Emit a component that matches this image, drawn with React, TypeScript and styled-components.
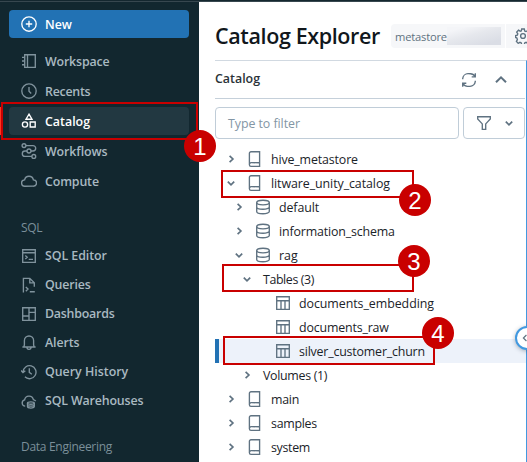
import React from "react";
import styled, { createGlobalStyle } from "styled-components";

const Global = createGlobalStyle`
  * { box-sizing: border-box; }
  body {
    margin: 0;
    overflow: hidden;
    background: #fff;
    font-family: "Open Sans", "Noto Sans", sans-serif;
    font-size: 12.4px;
    color: #11171c;
  }
`;

const Screen = styled.div`
  position: relative;
  display: flex;
  flex-direction: column;
  width: 527px;
  height: 462px;
  overflow: hidden;
`;

const TopStrip = styled.div`
  flex: none;
  height: 2px;
  background: #14272f;
  border-bottom: 1px solid #37474f;
`;

const Body = styled.div`
  display: flex;
  flex: 1;
  min-height: 0;
`;

const Sidebar = styled.nav`
  flex: none;
  width: 199px;
  padding: 8px 10px 0 9px;
  background: #12272f;
  overflow: hidden;
`;

const Label = styled.span<{ $spacing?: number }>`
  white-space: nowrap;
  letter-spacing: ${(p) => p.$spacing ?? 0}px;
`;

const NavItem = styled.div<{ $tall?: boolean; $active?: boolean }>`
  display: flex;
  align-items: center;
  gap: 8px;
  height: ${(p) => (p.$tall ? 28 : 27)}px;
  margin-bottom: 2px;
  padding-left: 12px;
  border-radius: 4px;
  font-weight: 600;
  color: ${(p) => (p.$active ? "#ffffff" : "#a9b9c1")};
  background: ${(p) => (p.$active ? "#223841" : "transparent")};
  svg { color: ${(p) => (p.$active ? "#ffffff" : "#80939d")}; }
`;

const NewButton = styled(NavItem)`
  margin-bottom: 9px;
  color: #fff;
  background: #2272b4;
  svg { color: #fff; }
`;

const SectionTitle = styled.div`
  height: 18px;
  margin: 24px 0 5px;
  padding-left: 12px;
  font-size: 12px;
  line-height: 18px;
  color: #7b8f99;
`;

const Main = styled.main`
  display: flex;
  flex-direction: column;
  flex: 1;
  min-width: 0;
  padding-left: 16px;
  background: #fff;
`;

const Header = styled.header`
  display: flex;
  align-items: center;
  flex: none;
  height: 58px;
  padding-top: 10px;
`;

const Title = styled.h1`
  flex: none;
  width: 176px;
  margin: 0;
  font-size: 21.5px;
  font-weight: 600;
  line-height: 28px;
  letter-spacing: -0.38px;
  white-space: nowrap;
`;

const Chip = styled.div`
  display: flex;
  align-items: center;
  flex: none;
  width: 114px;
  height: 24px;
  padding-left: 4px;
  border-radius: 4px 0 0 4px;
  background: #f6f7f9;
  color: #5f7281;
  font-size: 11.2px;
`;

const Redacted = styled.span`
  width: 54px;
  height: 18px;
  background: linear-gradient(165deg, #f4f5f8 15%, #e6e8ed 45%, #dadde5 85%);
`;

const GearChip = styled.div`
  display: flex;
  align-items: center;
  flex: none;
  width: 32px;
  height: 24px;
  margin-left: 1px;
  padding-left: 9px;
  background: #f6f7f9;
  color: #5f7281;
`;

const Panel = styled.section`
  flex: 1;
  border-top: 1px solid #d1d9e1;
  border-right: 1px solid #4299e0;
`;

const PanelHeader = styled.div`
  display: flex;
  align-items: center;
  height: 38px;
  margin-right: 1px;
  padding-bottom: 2px;
  border-bottom: 1px solid #c5d0da;
  font-weight: 600;
  color: #2a3238;
`;

const HeaderActions = styled.div`
  display: flex;
  align-items: center;
  gap: 16px;
  margin: 2px 16px 0 auto;
  color: #5f7281;
`;

const FilterRow = styled.div`
  display: flex;
  gap: 4px;
  margin: 8px 1px 8px 0;
`;

const FilterBox = styled.div`
  width: 244px;
  height: 32px;
  padding-left: 12px;
  border: 1px solid #c0cdd8;
  border-radius: 4px;
  line-height: 31px;
  color: #8396a5;
`;

const FilterButton = styled.div`
  display: flex;
  align-items: center;
  gap: 9px;
  flex: 1;
  height: 32px;
  padding-left: 12px;
  border: 1px solid #c0cdd8;
  border-radius: 4px;
  color: #5f7281;
`;

const TreeRow = styled.div<{ $depth: number; $selected?: boolean }>`
  display: flex;
  align-items: center;
  height: 24px;
  padding-left: ${(p) => 8 + p.$depth * 8 - (p.$selected ? 4 : 0)}px;
  border-left: ${(p) => (p.$selected ? "4px solid #2272b4" : "0")};
  background: ${(p) => (p.$selected ? "#edf2fa" : "transparent")};
  color: #1b2329;
`;

const CaretSlot = styled.span`
  display: flex;
  align-items: center;
  justify-content: center;
  flex: none;
  width: 16px;
  color: #5f7281;
`;

const IconSlot = styled.span`
  display: flex;
  align-items: center;
  flex: none;
  width: 24px;
  height: 24px;
  padding-bottom: 1px;
  color: #5f7281;
`;

const Gap = styled.span`
  flex: none;
  width: 8px;
`;

const CollapseHandle = styled.div`
  position: absolute;
  left: 515px;
  top: 326px;
  display: flex;
  align-items: center;
  padding-left: 2px;
  width: 24px;
  height: 24px;
  border: 2px solid #4299e0;
  border-radius: 50%;
  background: #fff;
  box-shadow: 0 1px 4px rgba(30, 50, 70, 0.35);
  color: #5f7281;
`;

const EdgeMark = styled.div`
  position: absolute;
  left: 0;
  top: 107px;
  width: 2px;
  height: 28px;
  background: #ff3621;
`;

const Outline = styled.div<{ $x: number; $y: number; $w: number; $h: number }>`
  position: absolute;
  left: ${(p) => p.$x}px;
  top: ${(p) => p.$y}px;
  width: ${(p) => p.$w}px;
  height: ${(p) => p.$h}px;
  border: 2px solid #c90000;
`;

const Step = styled.div<{ $x: number; $y: number }>`
  position: absolute;
  left: ${(p) => p.$x}px;
  top: ${(p) => p.$y}px;
  width: 32px;
  height: 32px;
  border-radius: 50%;
  background: #c90000;
  color: #fff;
  font: 24px/34px "Liberation Sans", Arial, sans-serif;
  text-align: center;
`;

const shapes = {
  plus: <><circle cx="8" cy="8" r="7.2" /><path d="M8 4.8v6.4M4.8 8h6.4" /></>,
  notebook: <path d="M3.7 1.7h10.6v12.6H3.7zM6.5 1.7v12.6M1 4.3h2.7M1 8h2.7M1 11.7h2.7" />,
  clock: <><circle cx="8" cy="8" r="7.2" /><path d="M8 4v4.3l2.2 2.2" /></>,
  shapes: <><path d="M8 1.2l3 5H5zM9.2 9h5v5h-5z" /><circle cx="4" cy="11.5" r="2.6" /></>,
  workflows: <><circle cx="3" cy="2.6" r="1.9" /><circle cx="8" cy="8" r="2" /><circle cx="12.8" cy="13.4" r="1.9" /><path d="M4.9 2.6H12a2.7 2.7 0 010 5.4h-2M6 8H4a2.7 2.7 0 000 5.4h6.9" /></>,
  cloud: <path d="M4 13.2a3.2 3.2 0 01-.4-6.4 4.5 4.5 0 018.8 0A3.2 3.2 0 0112.3 13.2z" />,
  editor: <path d="M1.7 1.7h12.6v12.6H1.7zM1.7 4.7h12.6M4.3 7.5l1.9 1.7-1.9 1.7M7.7 11.4H12" />,
  query: <path d="M2.4 15.4V1.3h6.4l4.5 4.5v4M8.8 1.3v4.5h4.5M4.8 10l2.2 2.1-2.2 2.1M8.8 14.7h5" />,
  dashboard: <path d="M1.7 1.7h12.6v12.6H1.7zM8 1.7v12.6M1.7 10H8M8 6.3h6.3" />,
  bell: <path d="M1.4 12h13.2M2.9 12l.5-2.3V5.6a4.6 4.6 0 019.2 0v4.1l.5 2.3M5.9 12a2.1 2.3 0 004.2 0" />,
  history: <path d="M2 8a6.5 6.5 0 111.9 4.8M.1 6.5L2 8.6l2.3-1.9M8.3 4.2v4.2l2.5 1.9" />,
  warehouse: <><path d="M4.2 13.2a3.2 3.2 0 01-.6-6.3 4.5 4.5 0 018.8-.3 3.2 3.2 0 012.3 1.6" /><path d="M6.5 10v3.6c0 2 6.8 2 6.8 0V10M6.5 12c0 1.5 6.8 1.5 6.8 0" /><ellipse cx="9.9" cy="10" rx="3.4" ry="1.2" /></>,
  gear: <><circle cx="8" cy="8" r="2.4" /><path d="M6.7 1h2.6l.4 2 1.3.6 1.8-1 1.8 1.9-1 1.7.5 1.3 2 .5v2l-2 .4-.6 1.3 1.1 1.8-1.9 1.8-1.7-1-1.3.6-.4 2H6.7l-.4-2-1.3-.6-1.8 1-1.8-1.8 1-1.8L1.9 10l-1.3-.5v-2l1.7-.4.5-1.3-1.1-1.8L3.5 2.2l1.7 1L6.3 3z" /></>,
  refresh: <path d="M1.7 7.2v-.6A5.4 5.4 0 017 1.7h2.5c2 0 3.6 1.2 4.8 3M14.3 1.2v3.6h-3.6M14.3 8.8v.6A5.4 5.4 0 019 14.3H6.5c-2 0-3.6-1.2-4.8-3M1.7 14.8v-3.6h3.6" />,
  up: <path d="M3 10.3l5-5 5 5" strokeWidth="2" />,
  funnel: <path d="M1.7 1.7h12.6v2.2l-4.6 5v5.4H6.3V8.9l-4.6-5z" />,
  book: <path d="M4 .7h8.6v14.6H4a1.6 1.6 0 01-1.6-1.6V2.3A1.6 1.6 0 014 .7zM2.4 13.7a1.8 1.8 0 011.8-2h8.4" />,
  database: <><ellipse cx="8" cy="3.5" rx="6.3" ry="2.3" /><path d="M1.7 3.5v9c0 3 12.6 3 12.6 0v-9M1.7 8c0 3 12.6 3 12.6 0" /></>,
  table: <path d="M1.7 1.7h12.6v12.6H1.7zM1.7 5.7h12.6M6 5.7v8.6M10 5.7v8.6" />,
  right: <path d="M6.6 4.8L9.9 8l-3.3 3.2" strokeWidth="1.7" />,
  down: <path d="M4.8 6.6L8 9.8l3.2-3.2" strokeWidth="1.7" />,
  left: <path d="M8.5 4.6L5 8l3.5 3.4" />,
};
type IconName = keyof typeof shapes;

const Svg = styled.svg`
  flex: none;
  display: block;
  fill: none;
  stroke: currentColor;
`;

const Icon = ({ name, size = 16 }: { name: IconName; size?: number }) => (
  <Svg width={size} height={size} viewBox="0 0 16 16" strokeWidth={1.35}>
    {shapes[name]}
  </Svg>
);

type Nav = [IconName, string, number];
const workspaceNav: Nav[] = [
  ["notebook", "Workspace", -0.17],
  ["clock", "Recents", -0.25],
  ["shapes", "Catalog", 0],
  ["workflows", "Workflows", -0.1],
  ["cloud", "Compute", -0.14],
];
const sqlNav: Nav[] = [
  ["editor", "SQL Editor", -0.05],
  ["query", "Queries", -0.18],
  ["dashboard", "Dashboards", -0.23],
  ["bell", "Alerts", -0.1],
  ["history", "Query History", 0],
  ["warehouse", "SQL Warehouses", -0.15],
];

interface Node {
  depth: number;
  caret?: "right" | "down";
  icon?: IconName;
  text: string;
  spacing: number;
  selected?: boolean;
}
const tree: Node[] = [
  { depth: 0, caret: "right", icon: "book", text: "hive_metastore", spacing: -0.14 },
  { depth: 0, caret: "down", icon: "book", text: "litware_unity_catalog", spacing: -0.07 },
  { depth: 1, caret: "right", icon: "database", text: "default", spacing: -0.1 },
  { depth: 1, caret: "right", icon: "database", text: "information_schema", spacing: -0.15 },
  { depth: 1, caret: "down", icon: "database", text: "rag", spacing: 0 },
  { depth: 2, caret: "down", text: "Tables (3)", spacing: -0.4 },
  { depth: 3.5, icon: "table", text: "documents_embedding", spacing: -0.05 },
  { depth: 3.5, icon: "table", text: "documents_raw", spacing: -0.17 },
  { depth: 3.5, icon: "table", text: "silver_customer_churn", spacing: -0.19, selected: true },
  { depth: 2, caret: "right", text: "Volumes (1)", spacing: -0.3 },
  { depth: 0, caret: "right", icon: "book", text: "main", spacing: -0.27 },
  { depth: 0, caret: "right", icon: "book", text: "samples", spacing: -0.27 },
  { depth: 0, caret: "right", icon: "book", text: "system", spacing: -0.32 },
];

export default function App() {
  return (
    <Screen>
      <Global />
      <TopStrip />
      <Body>
        <Sidebar>
          <NewButton $tall>
            <Icon name="plus" />
            <Label>New</Label>
          </NewButton>
          {workspaceNav.map(([icon, text, spacing]) => (
            <NavItem key={text} $tall $active={text === "Catalog"}>
              <Icon name={icon} />
              <Label $spacing={spacing}>{text}</Label>
            </NavItem>
          ))}
          <SectionTitle><Label $spacing={-0.35}>SQL</Label></SectionTitle>
          {sqlNav.map(([icon, text, spacing]) => (
            <NavItem key={text}>
              <Icon name={icon} />
              <Label $spacing={spacing}>{text}</Label>
            </NavItem>
          ))}
          <SectionTitle><Label $spacing={-0.29}>Data Engineering</Label></SectionTitle>
        </Sidebar>
        <Main>
          <Header>
            <Title>Catalog Explorer</Title>
            <Chip>
              <Label $spacing={-0.2}>metastore</Label>
              <Redacted />
            </Chip>
            <GearChip><Icon name="gear" /></GearChip>
          </Header>
          <Panel>
            <PanelHeader>
              <Label>Catalog</Label>
              <HeaderActions>
                <Icon name="refresh" />
                <Icon name="up" />
              </HeaderActions>
            </PanelHeader>
            <FilterRow>
              <FilterBox><Label $spacing={-0.06}>Type to filter</Label></FilterBox>
              <FilterButton>
                <Icon name="funnel" />
                <Icon name="down" />
              </FilterButton>
            </FilterRow>
            {tree.map((n) => (
              <TreeRow key={n.text} $depth={n.depth} $selected={n.selected}>
                <CaretSlot>{n.caret && <Icon name={n.caret} />}</CaretSlot>
                <Gap />
                {n.icon && <IconSlot><Icon name={n.icon} /></IconSlot>}
                <Label $spacing={n.spacing}>{n.text}</Label>
              </TreeRow>
            ))}
          </Panel>
        </Main>
      </Body>
      <CollapseHandle><Icon name="left" size={14} /></CollapseHandle>
      <EdgeMark />
      <Outline $x={1} $y={102} $w={197} $h={38} />
      <Outline $x={221} $y={170} $w={193} $h={28} />
      <Outline $x={222} $y={264} $w={192} $h={28} />
      <Outline $x={223} $y={336} $w={212} $h={29} />
      <Step $x={184} $y={130}>1</Step>
      <Step $x={399} $y={184}>2</Step>
      <Step $x={398} $y={245}>3</Step>
      <Step $x={422} $y={317}>4</Step>
    </Screen>
  );
}
